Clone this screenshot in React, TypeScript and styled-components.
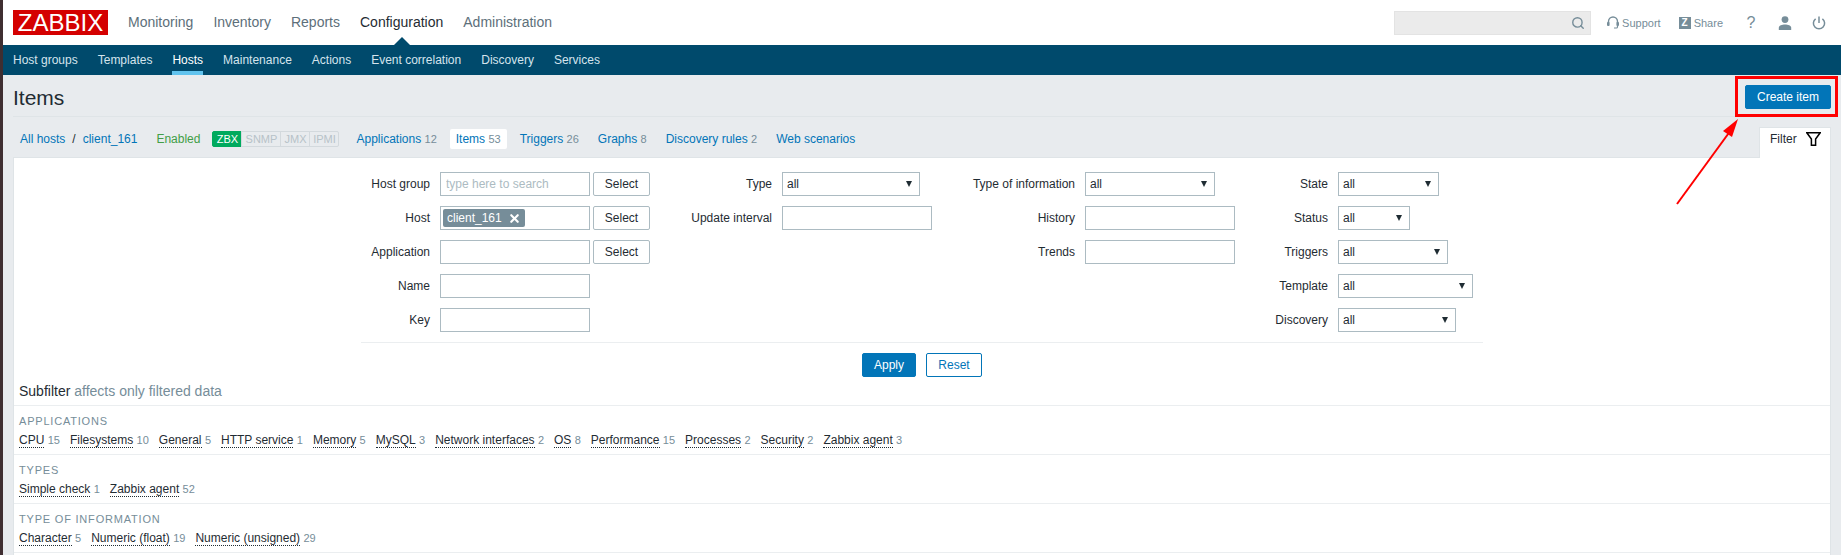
import React from "react";
import styled, { createGlobalStyle } from "styled-components";
import { Search, X } from "lucide-react";

const Global = createGlobalStyle`
  html, body { margin: 0; padding: 0; background: #fff; }
  body { font-family: "Liberation Sans", Arial, sans-serif; font-size: 12px; color: #1f2c33; }
`;

const Screen = styled.div`
  position: relative;
  width: 1838px;
  height: 555px;
  overflow: hidden;
  border-left: 3px solid #3f2e31;
  border-right: 2px solid #fff;
  background: #e8ebee;
`;

const TopBar = styled.header`
  display: flex;
  align-items: center;
  height: 45px;
  padding: 0 5px 0 10px;
  background: #fff;
`;

const Logo = styled.div`
  display: flex;
  align-items: center;
  justify-content: center;
  width: 95px;
  height: 25px;
  background: #d40000;
  color: #fff;
  font-size: 24px;
  line-height: 25px;
`;

const MainNav = styled.nav`
  display: flex;
  gap: 20px;
  margin-left: 20px;
`;

const MainNavItem = styled.span<{ $active?: boolean }>`
  position: relative;
  font-size: 14px;
  line-height: 45px;
  color: ${(p) => (p.$active ? "#1f2c33" : "#5d6f7a")};
  ${(p) =>
    p.$active &&
    `&::after {
      content: "";
      position: absolute;
      left: 50%;
      bottom: 0;
      margin-left: -8px;
      border-left: 8px solid transparent;
      border-right: 8px solid transparent;
      border-bottom: 8px solid #004a6c;
    }`}
`;

const TopRight = styled.div`
  display: flex;
  align-items: center;
  margin-left: auto;
`;

const SearchBox = styled.div`
  display: flex;
  align-items: center;
  justify-content: flex-end;
  box-sizing: border-box;
  width: 197px;
  height: 24px;
  padding-right: 5px;
  margin-right: 16px;
  background: #ebebeb;
  border: 1px solid #e3e3e3;
  color: #768d99;
`;

const HelpLink = styled.span<{ $end: number }>`
  display: flex;
  align-items: center;
  gap: 3px;
  margin-right: ${(p) => p.$end}px;
  font-size: 11px;
  color: #768d99;
`;

const ZBadge = styled.span`
  display: inline-flex;
  align-items: center;
  justify-content: center;
  width: 12px;
  height: 12px;
  background: #768d99;
  color: #fff;
  font-size: 10px;
  font-weight: bold;
  line-height: 12px;
`;

const IconCell = styled.span`
  display: flex;
  align-items: center;
  justify-content: center;
  width: 34px;
  height: 24px;
  color: #768d99;
  font-size: 16px;
`;

const SubNav = styled.nav`
  display: flex;
  gap: 20px;
  height: 30px;
  padding: 0 10px;
  background: #004a6c;
`;

const SubNavItem = styled.span<{ $active?: boolean }>`
  line-height: 30px;
  color: ${(p) => (p.$active ? "#fff" : "#d5e4ec")};
  box-shadow: ${(p) => (p.$active ? "inset 0 -4px 0 #61c3ee" : "none")};
`;

const TitleRow = styled.div`
  display: flex;
  align-items: center;
  justify-content: space-between;
  height: 41px;
  margin: 0 10px;
  border-bottom: 1px solid #dfe4e7;
`;

const Title = styled.h1`
  margin: 4px 0 0;
  font-size: 21px;
  font-weight: normal;
  color: #1f2c33;
`;

const Button = styled.button<{ $outline?: boolean; $w: number }>`
  box-sizing: border-box;
  width: ${(p) => p.$w}px;
  height: 24px;
  padding: 0;
  border: 1px solid #0275b8;
  border-radius: 2px;
  background: ${(p) => (p.$outline ? "#fff" : "#0275b8")};
  color: ${(p) => (p.$outline ? "#0275b8" : "#fff")};
  font: 12px "Liberation Sans", Arial, sans-serif;
`;

const CreateButton = styled(Button)`
  margin-top: 2px;
`;

const Highlight = styled.div`
  position: absolute;
  left: 1732px;
  top: 76px;
  box-sizing: border-box;
  width: 103px;
  height: 41px;
  border: 3px solid #f00;
  pointer-events: none;
`;

const ArrowSvg = styled.svg`
  position: absolute;
  left: 1660px;
  top: 110px;
`;

const TabsRow = styled.div`
  display: flex;
  align-items: flex-end;
  height: 40px;
  margin: 0 10px;
`;

const TabsLine = styled.div`
  box-sizing: border-box;
  display: flex;
  align-items: center;
  height: 40px;
  padding-top: 4px;
`;

const Link = styled.span<{ $ml?: number }>`
  color: #0275b8;
  margin-left: ${(p) => p.$ml ?? 0}px;
`;

const Slash = styled.span`
  margin: 0 7px;
  color: #1f2c33;
`;

const EnabledText = styled.span`
  margin-left: 19px;
  color: #429e47;
`;

const Agents = styled.div`
  display: flex;
  margin: 0 11px 0 12px;
`;

const Agent = styled.span<{ $on?: boolean; $w: number }>`
  box-sizing: border-box;
  width: ${(p) => p.$w}px;
  height: 16px;
  font-size: 11px;
  line-height: 14px;
  text-align: center;
  background: ${(p) => (p.$on ? "#00aa5e" : "#e8ebee")};
  color: ${(p) => (p.$on ? "#fff" : "#b7c2c8")};
  border: 1px solid ${(p) => (p.$on ? "#00aa5e" : "#d3d9dd")};
  margin-left: -1px;
  &:first-child { border-radius: 2px 0 0 2px; margin-left: 0; }
  &:last-child { border-radius: 0 2px 2px 0; }
`;

const Tab = styled.span<{ $current?: boolean }>`
  display: flex;
  align-items: center;
  gap: 3.33px;
  height: 20px;
  padding: 0 6px;
  margin-right: 7px;
  color: #0275b8;
  border-radius: 2px;
  background: ${(p) => (p.$current ? "#fff" : "transparent")};
`;

const Count = styled.span`
  font-size: 11px;
  color: #768d99;
`;

const FilterTab = styled.div`
  position: relative;
  z-index: 1;
  box-sizing: border-box;
  display: flex;
  align-items: center;
  gap: 9px;
  width: 72px;
  height: 31px;
  margin-left: auto;
  margin-bottom: -1px;
  padding: 0 0 8px 10px;
  background: #fff;
  border: 1px solid #dfe4e7;
  border-bottom: 0;
  color: #1f2c33;
`;

const Panel = styled.main`
  box-sizing: border-box;
  height: 420px;
  margin: 0 10px;
  background: #fff;
  border: 1px solid #dfe4e7;
  border-bottom: 0;
`;

const FilterBody = styled.div`
  width: 1122px;
  margin: 0 auto;
  padding-top: 14px;
`;

const FilterGrid = styled.div`
  display: flex;
`;

const FilterColumn = styled.div<{ $label: number; $w: number }>`
  display: grid;
  grid-template-columns: ${(p) => p.$label}px auto;
  grid-auto-rows: 24px;
  column-gap: 10px;
  row-gap: 10px;
  align-content: start;
  justify-items: start;
  width: ${(p) => p.$w}px;
`;

const Label = styled.label`
  justify-self: end;
  line-height: 24px;
  white-space: nowrap;
`;

const FieldWrap = styled.div`
  display: flex;
  gap: 3px;
`;

const TextField = styled.input`
  box-sizing: border-box;
  width: 150px;
  height: 24px;
  padding: 0 5px;
  border: 1px solid #acbbc2;
  border-radius: 0;
  background: #fff;
  font: 12px "Liberation Sans", Arial, sans-serif;
  outline: none;
  &::placeholder { color: #acbbc2; opacity: 1; }
`;

const TagField = styled.div`
  box-sizing: border-box;
  display: flex;
  align-items: center;
  width: 150px;
  height: 24px;
  padding: 0 2px;
  border: 1px solid #acbbc2;
`;

const Tag = styled.span`
  display: flex;
  align-items: center;
  gap: 6px;
  height: 18px;
  padding: 0 4px;
  border-radius: 2px;
  background: #768d99;
  color: #fff;
`;

const SelectButton = styled.button`
  box-sizing: border-box;
  width: 57px;
  height: 24px;
  padding: 0;
  border: 1px solid #acbbc2;
  border-radius: 2px;
  background: #fff;
  color: #1f2c33;
  font: 12px "Liberation Sans", Arial, sans-serif;
`;

const SelectBox = styled.div<{ $w: number }>`
  box-sizing: border-box;
  display: flex;
  align-items: center;
  justify-content: space-between;
  width: ${(p) => p.$w}px;
  height: 24px;
  padding: 0 7px 0 4px;
  border: 1px solid #acbbc2;
  background: #fff;
`;

const Caret = styled.span`
  width: 0;
  height: 0;
  border-left: 3px solid transparent;
  border-right: 3px solid transparent;
  border-top: 6px solid #1f2c33;
`;

const FormActions = styled.div`
  display: flex;
  justify-content: center;
  gap: 10px;
  margin-top: 10px;
  padding-top: 10px;
  border-top: 1px solid #ebeef0;
`;

const SubfilterHead = styled.div`
  height: 28px;
  padding-left: 5px;
  font-size: 14px;
  line-height: 28px;
`;

const Muted = styled.span`
  color: #768d99;
`;

const Section = styled.section`
  box-sizing: border-box;
  height: 49px;
  padding: 8px 0 0 5px;
  border-top: 1px solid #ebeef0;
`;

const SectionTitle = styled.h4`
  margin: 0;
  font-size: 11px;
  font-weight: normal;
  line-height: 14px;
  letter-spacing: 0.8px;
  text-transform: uppercase;
  color: #768d99;
`;

const FacetRow = styled.div`
  display: flex;
  gap: 10px;
  margin-top: 5px;
`;

const Facet = styled.span`
  display: flex;
  align-items: baseline;
  gap: 3.33px;
`;

const FacetName = styled.span`
  color: #1f2c33;
  line-height: 14px;
  border-bottom: 1px dotted #1f2c33;
`;

const subfilters: [string, [string, number][]][] = [
  ["Applications", [["CPU", 15], ["Filesystems", 10], ["General", 5], ["HTTP service", 1], ["Memory", 5], ["MySQL", 3], ["Network interfaces", 2], ["OS", 8], ["Performance", 15], ["Processes", 2], ["Security", 2], ["Zabbix agent", 3]]],
  ["Types", [["Simple check", 1], ["Zabbix agent", 52]]],
  ["Type of information", [["Character", 5], ["Numeric (float)", 19], ["Numeric (unsigned)", 29]]],
];

const Headset = () => (
  <svg width="12" height="13" viewBox="0 0 12 13" fill="none">
    <path d="M1.5 7V5.5a4.5 4.5 0 0 1 9 0V7" stroke="#768d99" strokeWidth="1.4" />
    <rect x="0" y="6" width="2.6" height="4" rx="1" fill="#768d99" />
    <rect x="9.4" y="6" width="2.6" height="4" rx="1" fill="#768d99" />
    <path d="M10.5 10v1a1.2 1.2 0 0 1-1.2 1H7" stroke="#768d99" strokeWidth="1.2" />
  </svg>
);

const Person = () => (
  <svg width="14" height="14" viewBox="0 0 14 14" fill="#768d99">
    <circle cx="7" cy="3.6" r="3.4" />
    <path d="M0.8 14v-2.2C0.8 9.8 4 8.6 7 8.6s6.2 1.2 6.2 3.2V14z" />
  </svg>
);

const Power = () => (
  <svg width="14" height="14" viewBox="0 0 14 14" fill="none" stroke="#768d99" strokeWidth="1.5">
    <path d="M7 0.5v6.5" />
    <path d="M3.6 2.8a5.6 5.6 0 1 0 6.8 0" />
  </svg>
);

const Funnel = () => (
  <svg width="15" height="14" viewBox="0 0 15 14" fill="none" stroke="#000" strokeWidth="1.5">
    <path d="M0.8 0.8h13.4L9.6 7v6.2H5.4V7z" />
  </svg>
);

export default function App() {
  return (
    <>
      <Global />
      <Screen>
        <TopBar>
          <Logo>ZABBIX</Logo>
          <MainNav>
            <MainNavItem>Monitoring</MainNavItem>
            <MainNavItem>Inventory</MainNavItem>
            <MainNavItem>Reports</MainNavItem>
            <MainNavItem $active>Configuration</MainNavItem>
            <MainNavItem>Administration</MainNavItem>
          </MainNav>
          <TopRight>
            <SearchBox><Search size={14} strokeWidth={2.4} /></SearchBox>
            <HelpLink $end={18}><Headset />Support</HelpLink>
            <HelpLink $end={11}><ZBadge>Z</ZBadge>Share</HelpLink>
            <IconCell>?</IconCell>
            <IconCell><Person /></IconCell>
            <IconCell><Power /></IconCell>
          </TopRight>
        </TopBar>
        <SubNav>
          <SubNavItem>Host groups</SubNavItem>
          <SubNavItem>Templates</SubNavItem>
          <SubNavItem $active>Hosts</SubNavItem>
          <SubNavItem>Maintenance</SubNavItem>
          <SubNavItem>Actions</SubNavItem>
          <SubNavItem>Event correlation</SubNavItem>
          <SubNavItem>Discovery</SubNavItem>
          <SubNavItem>Services</SubNavItem>
        </SubNav>
        <TitleRow>
          <Title>Items</Title>
          <CreateButton $w={86}>Create item</CreateButton>
        </TitleRow>
        <TabsRow>
          <TabsLine>
            <Link $ml={7}>All hosts</Link>
            <Slash>/</Slash>
            <Link>client_161</Link>
            <EnabledText>Enabled</EnabledText>
            <Agents>
              <Agent $on $w={30}>ZBX</Agent>
              <Agent $w={40}>SNMP</Agent>
              <Agent $w={30}>JMX</Agent>
              <Agent $w={30}>IPMI</Agent>
            </Agents>
            <Tab>Applications <Count>12</Count></Tab>
            <Tab $current>Items <Count>53</Count></Tab>
            <Tab>Triggers <Count>26</Count></Tab>
            <Tab>Graphs <Count>8</Count></Tab>
            <Tab>Discovery rules <Count>2</Count></Tab>
            <Tab>Web scenarios</Tab>
          </TabsLine>
          <FilterTab>Filter<Funnel /></FilterTab>
        </TabsRow>
        <Panel>
          <FilterBody>
            <FilterGrid>
              <FilterColumn $label={69} $w={299}>
                <Label>Host group</Label>
                <FieldWrap><TextField readOnly placeholder="type here to search" /><SelectButton>Select</SelectButton></FieldWrap>
                <Label>Host</Label>
                <FieldWrap>
                  <TagField><Tag>client_161<X size={13} strokeWidth={4} /></Tag></TagField>
                  <SelectButton>Select</SelectButton>
                </FieldWrap>
                <Label>Application</Label>
                <FieldWrap><TextField readOnly /><SelectButton>Select</SelectButton></FieldWrap>
                <Label>Name</Label>
                <TextField readOnly />
                <Label>Key</Label>
                <TextField readOnly />
              </FilterColumn>
              <FilterColumn $label={112} $w={300}>
                <Label>Type</Label>
                <SelectBox $w={138}>all<Caret /></SelectBox>
                <Label>Update interval</Label>
                <TextField readOnly />
              </FilterColumn>
              <FilterColumn $label={115} $w={285}>
                <Label>Type of information</Label>
                <SelectBox $w={130}>all<Caret /></SelectBox>
                <Label>History</Label>
                <TextField readOnly />
                <Label>Trends</Label>
                <TextField readOnly />
              </FilterColumn>
              <FilterColumn $label={83} $w={238}>
                <Label>State</Label>
                <SelectBox $w={101}>all<Caret /></SelectBox>
                <Label>Status</Label>
                <SelectBox $w={72}>all<Caret /></SelectBox>
                <Label>Triggers</Label>
                <SelectBox $w={110}>all<Caret /></SelectBox>
                <Label>Template</Label>
                <SelectBox $w={135}>all<Caret /></SelectBox>
                <Label>Discovery</Label>
                <SelectBox $w={118}>all<Caret /></SelectBox>
              </FilterColumn>
            </FilterGrid>
            <FormActions>
              <Button $w={54}>Apply</Button>
              <Button $outline $w={56}>Reset</Button>
            </FormActions>
          </FilterBody>
          <SubfilterHead>Subfilter <Muted>affects only filtered data</Muted></SubfilterHead>
          {subfilters.map(([title, facets]) => (
            <Section key={title}>
              <SectionTitle>{title}</SectionTitle>
              <FacetRow>
                {facets.map(([name, n]) => (
                  <Facet key={name}><FacetName>{name}</FacetName><Count>{n}</Count></Facet>
                ))}
              </FacetRow>
            </Section>
          ))}
          <Section />
        </Panel>
        <Highlight />
        <ArrowSvg width="90" height="100" viewBox="0 0 90 100">
          <path d="M14 94 L68 20" stroke="#f00" strokeWidth="2" fill="none" />
          <polygon points="75,9 60,21 69,27" fill="#f00" />
        </ArrowSvg>
      </Screen>
    </>
  );
}
